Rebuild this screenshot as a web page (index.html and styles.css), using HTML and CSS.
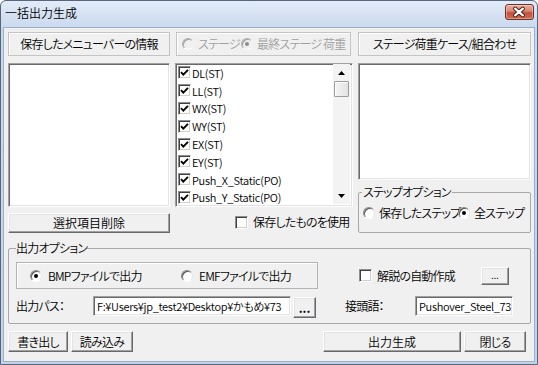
FILE: index.html
```html
<!DOCTYPE html>
<html lang="ja">
<head>
<meta charset="utf-8">
<title>一括出力生成</title>
<link rel="stylesheet" href="styles.css">
</head>
<body>
<div class="window">
  <div class="titlebar">
    <span class="title">一括出力生成</span>
    <span class="close" aria-label="閉じる">
      <svg width="29" height="16" viewBox="0 0 29 16">
        <path d="M10.5 4.5 L18.5 11.5 M18.5 4.5 L10.5 11.5" stroke="#4a2018" stroke-width="4.2" stroke-linecap="round"/>
        <path d="M10.5 4.5 L18.5 11.5 M18.5 4.5 L10.5 11.5" stroke="#ffffff" stroke-width="2.2" stroke-linecap="round"/>
      </svg>
    </span>
  </div>
  <div class="client">
    <div class="top">
      <div class="col col1">
        <div class="caption">保存したメニューバーの情報</div>
        <div class="listbox list-saved"></div>
        <div class="button btn-delete">選択項目削除</div>
      </div>
      <div class="col col2">
        <div class="radio-frame disabled">
          <span class="opt opt-stage"><span class="radio"></span>ステージ</span>
          <span class="opt"><span class="radio checked"></span>最終ステージ 荷重</span>
        </div>
        <div class="listbox checklist">
          <div class="items">
            <div class="item"><span class="cb"><svg width="11" height="11" viewBox="0 0 11 11"><path d="M2 5.2 L4.3 7.6 L9 2.8" fill="none" stroke="#000" stroke-width="1.9"/></svg></span>DL(ST)</div>
            <div class="item"><span class="cb"><svg width="11" height="11" viewBox="0 0 11 11"><path d="M2 5.2 L4.3 7.6 L9 2.8" fill="none" stroke="#000" stroke-width="1.9"/></svg></span>LL(ST)</div>
            <div class="item"><span class="cb"><svg width="11" height="11" viewBox="0 0 11 11"><path d="M2 5.2 L4.3 7.6 L9 2.8" fill="none" stroke="#000" stroke-width="1.9"/></svg></span>WX(ST)</div>
            <div class="item"><span class="cb"><svg width="11" height="11" viewBox="0 0 11 11"><path d="M2 5.2 L4.3 7.6 L9 2.8" fill="none" stroke="#000" stroke-width="1.9"/></svg></span>WY(ST)</div>
            <div class="item"><span class="cb"><svg width="11" height="11" viewBox="0 0 11 11"><path d="M2 5.2 L4.3 7.6 L9 2.8" fill="none" stroke="#000" stroke-width="1.9"/></svg></span>EX(ST)</div>
            <div class="item"><span class="cb"><svg width="11" height="11" viewBox="0 0 11 11"><path d="M2 5.2 L4.3 7.6 L9 2.8" fill="none" stroke="#000" stroke-width="1.9"/></svg></span>EY(ST)</div>
            <div class="item"><span class="cb"><svg width="11" height="11" viewBox="0 0 11 11"><path d="M2 5.2 L4.3 7.6 L9 2.8" fill="none" stroke="#000" stroke-width="1.9"/></svg></span>Push_X_Static(PO)</div>
            <div class="item"><span class="cb"><svg width="11" height="11" viewBox="0 0 11 11"><path d="M2 5.2 L4.3 7.6 L9 2.8" fill="none" stroke="#000" stroke-width="1.9"/></svg></span>Push_Y_Static(PO)</div>
          </div>
          <div class="scrollbar">
            <div class="sb-arrow"><svg width="7" height="4" viewBox="0 0 7 4"><path d="M0 4 L3.5 0 L7 4 Z" fill="#000"/></svg></div>
            <div class="sb-thumb"></div>
            <div class="sb-track"></div>
            <div class="sb-arrow"><svg width="7" height="4" viewBox="0 0 7 4"><path d="M0 0 L3.5 4 L7 0 Z" fill="#000"/></svg></div>
          </div>
        </div>
        <div class="check-row use-saved"><span class="cb"></span>保存したものを使用</div>
      </div>
      <div class="col col3">
        <div class="caption">ステージ荷重ケース/組合わせ</div>
        <div class="listbox list-cases"></div>
        <fieldset class="group step-group">
          <legend>ステップオプション</legend>
          <div class="radio-row">
            <span class="opt opt-saved-step"><span class="radio"></span>保存したステップ</span>
            <span class="opt"><span class="radio checked"></span>全ステップ</span>
          </div>
        </fieldset>
      </div>
    </div>

    <fieldset class="group output-group">
      <legend>出力オプション</legend>
      <div class="out-row1">
        <div class="format-box">
          <span class="opt opt-bmp"><span class="radio checked"></span>BMPファイルで出力</span>
          <span class="opt"><span class="radio"></span>EMFファイルで出力</span>
        </div>
        <div class="check-row auto-doc"><span class="cb"></span>解説の自動作成</div>
        <div class="button btn-dots-small">...</div>
      </div>
      <div class="out-row2">
        <span class="field-label path-label">出力パス：</span>
        <div class="textbox path-box">F:¥Users¥jp_test2¥Desktop¥かもめ¥73</div>
        <div class="button btn-dots">...</div>
        <span class="field-label prefix-label">接頭語：</span>
        <div class="textbox prefix-box">Pushover_Steel_73</div>
      </div>
    </fieldset>

    <div class="bottom">
      <div class="button btn-export">書き出し</div>
      <div class="button btn-import">読み込み</div>
      <div class="button btn-generate">出力生成</div>
      <div class="button btn-close">閉じる</div>
    </div>
  </div>
</div>
</body>
</html>
```

FILE: styles.css
```css
* { box-sizing: border-box; }

html, body {
  margin: 0;
  padding: 0;
}

body {
  width: 538px;
  height: 365px;
  overflow: hidden;
  background: #ffffff;
  font-family: "Noto Sans CJK JP", "Liberation Sans", sans-serif;
  font-size: 12px;
  font-weight: 350;
  line-height: 14px;
  letter-spacing: -0.8px;
  color: #000;
  font-feature-settings: "palt";
}

.window {
  width: 538px;
  height: 365px;
  border: 1px solid #56667c;
  border-radius: 6px 6px 0 0;
  background: linear-gradient(to bottom, #e2ebf7 0px, #cad9ee 27px, #c2d3ea 100%);
  display: flex;
  flex-direction: column;
}

.titlebar {
  height: 26px;
  display: flex;
  align-items: flex-start;
  padding: 0 3px 0 4px;
}

.title {
  flex: 1;
  margin-top: 5px;
  font-size: 12px;
  line-height: 14px;
  letter-spacing: 0;
  color: #000;
}

.close {
  width: 29px;
  height: 16px;
  margin-top: 3px;
  border: 1px solid #6e2f24;
  border-radius: 3px;
  background: linear-gradient(to bottom, #eab0a2 0%, #d98470 45%, #c2513c 55%, #cf6a50 100%);
  box-shadow: inset 0 0 0 1px rgba(255, 255, 255, 0.35);
  display: flex;
}

.close svg { margin: -1px 0 0 -1px; }

.client {
  flex: 1;
  margin: 0 2px 2px 2px;
  border: 1px solid #9cafc9;
  background: #f0f0f0;
  padding: 4px 3px 0 4px;
  display: flex;
  flex-direction: column;
}

/* ---------- top section ---------- */
.top {
  display: flex;
  gap: 5px;
  height: 201px;
}

.col {
  display: flex;
  flex-direction: column;
}

.col1 { width: 162px; }
.col2 { width: 178px; }
.col3 { width: 173px; }

.caption {
  height: 24px;
  flex: none;
  margin-bottom: 7px;
  border: 1px solid #c4c4c4;
  box-shadow: inset 1px 1px 0 #ffffff;
  display: flex;
  align-items: center;
  justify-content: center;
  white-space: nowrap;
}

.listbox {
  flex: none;
  background: #fff;
  border: 1px solid;
  border-color: #a0a0a0 #ffffff #ffffff #a0a0a0;
  box-shadow: inset 1px 1px 0 #696969, inset -1px -1px 0 #e3e3e3;
}

.list-saved { height: 144px; }
.list-cases { height: 117px; }

.button {
  flex: none;
  background: #f0f0f0;
  border: 1px solid;
  border-color: #ffffff #696969 #696969 #ffffff;
  box-shadow: inset -1px -1px 0 #a0a0a0, inset 1px 1px 0 #e3e3e3;
  display: flex;
  align-items: center;
  justify-content: center;
  white-space: nowrap;
}

.btn-delete {
  height: 20px;
  margin-top: 6px;
  letter-spacing: 0;
}

/* radios */
.opt {
  display: inline-flex;
  align-items: center;
  white-space: nowrap;
}

.radio {
  position: relative;
  width: 12px;
  height: 12px;
  flex: none;
  margin-right: 4px;
  border-radius: 50%;
  border: 1px solid;
  border-color: #8a8a8a #e6e6e6 #ffffff #8a8a8a;
  box-shadow: inset 1px 1px 0 #555555;
  background: #ffffff;
}

.radio.checked::after {
  content: "";
  position: absolute;
  left: 3px;
  top: 3px;
  width: 4px;
  height: 4px;
  border-radius: 50%;
  background: #000;
}

.radio-frame {
  height: 24px;
  width: 175px;
  flex: none;
  margin: 0 0 7px 1px;
  border: 1px solid #c4c4c4;
  box-shadow: inset 1px 1px 0 #ffffff;
  display: flex;
  align-items: center;
  padding-left: 5px;
}

.radio-frame.disabled { color: #a0a0a0; }
.radio-frame.disabled .radio {
  background: #f0f0f0;
  border-color: #b0b0b0 #f4f4f4 #ffffff #b0b0b0;
  box-shadow: inset 1px 1px 0 #a0a0a0;
}
.radio-frame.disabled .radio.checked::after { background: #8c8c8c; }

.opt-stage { width: 59px; }

/* checklist */
.checklist {
  height: 144px;
  display: flex;
  padding: 0 2px 2px 2px;
}

.items {
  flex: 1;
  overflow: hidden;
  font-size: 11px;
  letter-spacing: -0.3px;
}

.item {
  height: 17.8px;
  display: flex;
  align-items: center;
  white-space: nowrap;
}

.cb {
  width: 13px;
  height: 13px;
  flex: none;
  margin-right: 1px;
  background: #fff;
  border: 1px solid;
  border-color: #8e8f8f #ffffff #ffffff #8e8f8f;
  box-shadow: inset 1px 1px 0 #404040, inset -1px -1px 0 #d4d0c8;
  display: flex;
  align-items: center;
  justify-content: center;
}

.scrollbar {
  width: 17px;
  flex: none;
  display: flex;
  flex-direction: column;
  background: #f3f3f3;
}

.sb-arrow {
  height: 17px;
  flex: none;
  display: flex;
  align-items: center;
  justify-content: center;
}

.sb-thumb {
  height: 16px;
  flex: none;
  margin: 0 1px;
  border: 1px solid #9d9d9d;
  border-radius: 1px;
  background: linear-gradient(to right, #f4f4f4, #e3e3e3);
  box-shadow: inset 1px 1px 0 #ffffff;
}

.sb-track { flex: 1; }

.check-row {
  display: flex;
  align-items: center;
  white-space: nowrap;
}

.check-row .cb { margin-right: 5px; }

.use-saved {
  height: 14px;
  margin-top: 8px;
  padding-left: 60px;
}

/* group boxes */
.group {
  margin: 0;
  border: 1px solid #a8a8a8;
  border-radius: 2px;
  min-width: 0;
}

.group legend {
  padding: 0 1px;
  line-height: 14px;
  font-size: 12px;
}

.step-group {
  margin-top: 5px;
  height: 48px;
  padding: 7px 3px 0 3px;
}

.radio-row {
  height: 14px;
  display: flex;
  align-items: center;
  padding-left: 1px;
}

.opt-saved-step { width: 95px; }

/* output options */
.output-group {
  margin-top: 8px;
  height: 83px;
  padding: 7px 7px 4px 7px;
}

.output-group legend { padding: 0; }

.out-row1 {
  height: 27px;
  display: flex;
  align-items: center;
}

.format-box {
  width: 302px;
  height: 27px;
  flex: none;
  border: 1px solid #b4b4b4;
  box-shadow: inset 1px 1px 0 #ffffff;
  display: flex;
  align-items: center;
  padding-left: 13px;
  padding-top: 1px;
}

.format-box .radio { margin-right: 6px; }

.opt-bmp { width: 151px; }

.auto-doc {
  margin-left: 41px;
}

.btn-dots-small {
  width: 28px;
  height: 18px;
  margin-left: auto;
  margin-right: 14px;
  font-size: 9px;
  line-height: 10px;
  letter-spacing: 0;
  align-items: flex-end;
  padding-bottom: 3px;
}

.out-row2 {
  margin-top: 7px;
  height: 22px;
  display: flex;
  align-items: flex-start;
}

.field-label {
  height: 20px;
  display: flex;
  align-items: center;
  white-space: nowrap;
}

.path-label { width: 77px; }
.prefix-label { width: 70px; margin-left: 29px; }

.textbox {
  height: 20px;
  flex: none;
  background: #fff;
  border: 1px solid;
  border-color: #a0a0a0 #ffffff #ffffff #a0a0a0;
  box-shadow: inset 1px 1px 0 #696969, inset -1px -1px 0 #e3e3e3;
  padding: 0 2px 0 3px;
  font-size: 11px;
  letter-spacing: -0.3px;
  line-height: 18px;
  white-space: nowrap;
  overflow: hidden;
}

.path-box { width: 198px; }
.prefix-box { width: 98px; }

.btn-dots {
  width: 23px;
  height: 21px;
  margin: 1px 0 0 2px;
  font-weight: bold;
  font-size: 12px;
  letter-spacing: 0;
  align-items: flex-end;
  padding-bottom: 2px;
}

/* bottom buttons */
.bottom {
  margin-top: 7px;
  height: 21px;
  display: flex;
}

.bottom .button { height: 21px; }

.btn-export { width: 60px; }
.btn-import { width: 62px; margin-left: 3px; }
.btn-generate { width: 138px; margin-left: auto; letter-spacing: 0; }
.btn-close { width: 62px; margin-left: 3px; margin-right: 5px; }
```
